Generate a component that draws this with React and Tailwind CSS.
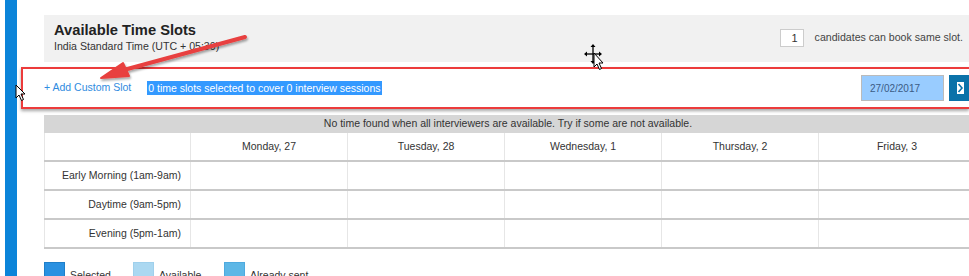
import React from "react";

const days = ["Monday, 27", "Tuesday, 28", "Wednesday, 1", "Thursday, 2", "Friday, 3"];
const rows = ["Early Morning (1am-9am)", "Daytime (9am-5pm)", "Evening (5pm-1am)"];

export default function App() {
  return (
    <div
      className="relative w-[969px] h-[276px] overflow-hidden bg-white flex text-[#333]"
      style={{ fontFamily: '"Liberation Sans", Arial, sans-serif' }}
    >
      <div className="ml-[5px] w-[12px] h-full bg-[#0b84d9] shrink-0" />
      <div className="ml-[4px] flex-1 flex flex-col pt-[15px] min-w-0">
        {/* header */}
        <div className="shrink-0 ml-[23px] h-[47px] bg-[#f1f1f1] flex items-start justify-between pl-[10px] pt-[7px] pr-[6px]">
          <div className="flex flex-col">
            <div className="text-[14.7px] font-bold leading-[17px] text-[#222]">Available Time Slots</div>
            <div className="text-[10.6px] leading-[13px] text-[#333] mt-[1px]">India Standard Time (UTC + 05:30)</div>
          </div>
          <div className="flex items-center mt-[7px]">
            <div className="w-[24px] h-[18px] bg-white border border-[#ccc] text-[11px] flex items-center justify-end pr-[5px]">1</div>
            <div className="ml-[11px] text-[10.6px] text-[#444]">candidates can book same slot.</div>
          </div>
        </div>
        {/* red box */}
        <div className="shrink-0 mt-[5px] h-[42px] border-2 border-r-0 border-[#ec3b3b] shadow-[0_2px_3px_rgba(0,0,0,0.35)] flex items-center bg-white">
          <div className="ml-[21px] text-[10.5px] text-[#2f8be0]">+ Add Custom Slot</div>
          <div className="ml-[16px] text-[10.5px] leading-[14px] bg-[#3399ff] text-white px-[1px]">0 time slots selected to cover 0 interview sessions</div>
          <div className="ml-auto flex items-center">
            <div className="w-[83px] h-[26px] bg-[#99ccff] border border-[#bbb] text-[10px] text-[#3b5b85] flex items-center pl-[8px]">27/02/2017</div>
            <div className="ml-[5px] w-[20px] h-[26px] bg-[#0b72a9] flex items-center pl-[8px]">
              <svg width="7" height="12" viewBox="0 0 7 12">
                <rect x="0" y="0" width="7" height="12" fill="#fff" />
                <path d="M1.5 2 L5 6 L1.5 10" stroke="#0b72a9" strokeWidth="1.6" fill="none" />
              </svg>
            </div>
          </div>
        </div>
        {/* info bar */}
        <div className="shrink-0 ml-[23px] mt-[6px] h-[18px] bg-[#d6d6d6] text-[10.5px] text-[#333] flex items-center justify-center w-[932px] pr-[4px]">
          No time found when all interviewers are available. Try if some are not available.
        </div>
        {/* table */}
        <div className="shrink-0 ml-[23px] w-[932px] flex flex-col">
          <div className="flex h-[29px] border-b-2 border-[#c9c9c9]">
            <div className="w-[146px] shrink-0 border-l border-[#e6e6e6]" />
            {days.map((d) => (
              <div key={d} className="w-[157px] shrink-0 border-l border-[#e6e6e6] flex items-center justify-center text-[10.5px] text-[#333]">
                {d}
              </div>
            ))}
          </div>
          {rows.map((r) => (
            <div key={r} className="flex h-[29px] border-b-2 border-[#c9c9c9]">
              <div className="w-[146px] shrink-0 border-l border-[#e6e6e6] flex items-center justify-end pr-[9px] text-[10.5px] text-[#333] whitespace-nowrap">
                {r}
              </div>
              {days.map((d) => (
                <div key={d} className="w-[157px] shrink-0 border-l border-[#e6e6e6]" />
              ))}
            </div>
          ))}
        </div>
        {/* legend */}
        <div className="shrink-0 ml-[23px] mt-[13px] flex items-start text-[10.5px] text-[#333]">
          <div className="w-[21px] h-[20px] bg-[#2a91e1] border border-[#1f7fc9]" />
          <div className="ml-[5px] mt-[6px] w-[63px]">Selected</div>
          <div className="w-[21px] h-[20px] bg-[#abd8f1] border border-[#9fd0ec]" />
          <div className="ml-[5px] mt-[6px] w-[65px]">Available</div>
          <div className="w-[21px] h-[20px] bg-[#5db7e6] border border-[#4eaadf]" />
          <div className="ml-[5px] mt-[6px]">Already sent</div>
        </div>
      </div>

      {/* red annotation arrow */}
      <svg className="absolute left-0 top-0 pointer-events-none" width="969" height="276">
        <defs>
          <filter id="sh" x="-10%" y="-30%" width="130%" height="180%">
            <feDropShadow dx="1" dy="2" stdDeviation="1.2" floodColor="#000" floodOpacity="0.35" />
          </filter>
        </defs>
        <g filter="url(#sh)">
          <line x1="245" y1="37" x2="120" y2="71" stroke="#e8413f" strokeWidth="4" strokeLinecap="round" />
          <path d="M101 78 L123 63 L129 76 Z" fill="#e8413f" stroke="#e8413f" strokeWidth="2" strokeLinejoin="round" />
        </g>
      </svg>

      {/* move cursor */}
      <svg className="absolute left-[584px] top-[44px] pointer-events-none" width="22" height="30" viewBox="0 0 22 30">
        <g stroke="#000" strokeWidth="1.3" fill="none">
          <line x1="9" y1="2" x2="9" y2="18" />
          <line x1="2" y1="10" x2="16" y2="10" />
        </g>
        <path d="M9 0 L11.5 3 L6.5 3 Z M0 10 L3 7.5 L3 12.5 Z M18 10 L15 7.5 L15 12.5 Z M9 20 L6.5 17 L11.5 17 Z" fill="#000" />
        <path d="M10 9 L10 23 L13 20 L15.5 25.5 L17.5 24.5 L15 19 L19 19 Z" fill="#fff" stroke="#000" strokeWidth="1" />
      </svg>

      {/* pointer cursor */}
      <svg className="absolute left-[15px] top-[84px] pointer-events-none" width="12" height="18" viewBox="0 0 12 18">
        <path d="M1 1 L1 14 L4 11 L6.5 16.5 L8.5 15.5 L6 10 L10 10 Z" fill="#fff" stroke="#000" strokeWidth="1" />
      </svg>
    </div>
  );
}
